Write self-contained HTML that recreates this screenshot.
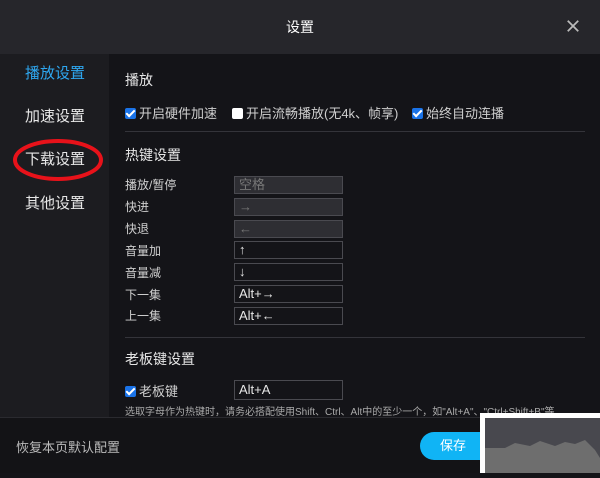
<!DOCTYPE html>
<html><head><meta charset="utf-8"><style>
*{margin:0;padding:0;box-sizing:border-box}
body{width:600px;height:473px;overflow:hidden;background:#141418;font-family:"Liberation Sans","Noto Sans CJK SC",sans-serif;color:#d0d0d0;position:relative}
.hdr{position:absolute;left:0;top:0;width:600px;height:54px;background:#26262b;color:#fff;font-size:14px;text-align:center;line-height:54px}
.x{position:absolute;right:20px;top:19px;width:14px;height:14px}
.side{position:absolute;left:0;top:54px;width:109px;height:363px;background:#1c1c20}
.side div{position:absolute;left:25px;font-size:15px;color:#e8e8e8}
.t{position:absolute;font-size:14px;color:#e6e6e6}
.s{position:absolute;font-size:12px;color:#cfcfcf}
.cb{display:inline-block;width:11px;height:11px;vertical-align:-1px;margin-right:3px;border-radius:2px}
.on{background:#1a73e8;position:relative}
.on:after{content:"";position:absolute;left:3px;top:0px;width:3px;height:7px;border:solid #fff;border-width:0 2px 2px 0;transform:rotate(45deg)}
.off{background:#fff}
.hr{position:absolute;left:125px;width:460px;height:1px;background:#34343a}
.in{position:absolute;left:234px;width:109px;height:18px;border:1px solid #4a4a50;font-size:13px;color:#e6e6e6;padding-left:4px;line-height:16px}
.dis{background:#2e2e33;color:#777}
.foot{position:absolute;left:0;top:417px;width:600px;height:56px;background:#131316;border-top:1px solid #2a2a2f}
</style></head><body>
<div class="hdr">设置
<svg class="x" viewBox="0 0 16 16"><path d="M2 2L14 14M14 2L2 14" stroke="#bbb" stroke-width="2"/></svg></div>
<div class="side">
<div style="top:8px;color:#2ea7f0">播放设置</div>
<div style="top:51px">加速设置</div>
<div style="top:94px">下载设置</div>
<div style="top:138px">其他设置</div>
</div>
<svg style="position:absolute;left:12px;top:138px" width="92" height="46"><ellipse cx="46" cy="22" rx="43" ry="19" fill="none" stroke="#e8121a" stroke-width="4"/></svg>
<div class="t" style="left:125px;top:70px">播放</div>
<div class="s" style="left:125px;top:103px;font-size:13px"><span class="cb on"></span>开启硬件加速</div>
<div class="s" style="left:232px;top:103px;font-size:13px"><span class="cb off"></span>开启流畅播放(无4k、帧享)</div>
<div class="s" style="left:412px;top:103px;font-size:13px"><span class="cb on"></span>始终自动连播</div>
<div class="hr" style="top:131px"></div>
<div class="t" style="left:125px;top:145px">热键设置</div>
<div class="s" style="left:125px;top:176px">播放/暂停</div>
<div class="s" style="left:125px;top:198px">快进</div>
<div class="s" style="left:125px;top:220px">快退</div>
<div class="s" style="left:125px;top:242px">音量加</div>
<div class="s" style="left:125px;top:264px">音量减</div>
<div class="s" style="left:125px;top:286px">下一集</div>
<div class="s" style="left:125px;top:307px">上一集</div>
<div class="in dis" style="top:176px">空格</div>
<div class="in dis" style="top:198px">→</div>
<div class="in dis" style="top:220px">←</div>
<div class="in" style="top:241px">↑</div>
<div class="in" style="top:263px">↓</div>
<div class="in" style="top:285px">Alt+→</div>
<div class="in" style="top:307px">Alt+←</div>
<div class="hr" style="top:337px"></div>
<div class="t" style="left:125px;top:349px">老板键设置</div>
<div class="s" style="left:125px;top:381px;font-size:13px"><span class="cb on"></span>老板键</div>
<div class="in" style="left:234px;top:380px;height:20px;font-size:13px;line-height:18px">Alt+A</div>
<div class="s" style="left:125px;top:403px;font-size:10px;color:#aaa;white-space:nowrap">选取字母作为热键时，请务必搭配使用Shift、Ctrl、Alt中的至少一个，如"Alt+A"、"Ctrl+Shift+B"等</div>
<div class="foot">
<div style="position:absolute;left:16px;top:19px;font-size:13px;color:#bbb">恢复本页默认配置</div>
<div style="position:absolute;left:420px;top:14px;width:80px;height:28px;border-radius:14px;background:#10b4f5;color:#fff;font-size:13px;line-height:28px;padding-left:20px">保存</div>
</div>
<div style="position:absolute;left:480px;top:413px;width:120px;height:60px;background:#fff;padding:5px 0 0 5px">
<svg width="115" height="55"><rect width="115" height="55" fill="#48484e"/><path d="M0 30L20 30 30 25 45 28 55 23 70 28 80 24 90 26 100 22 110 32 115 40V55H0Z" fill="#6e6e6e"/></svg>
</div>
</body></html>
